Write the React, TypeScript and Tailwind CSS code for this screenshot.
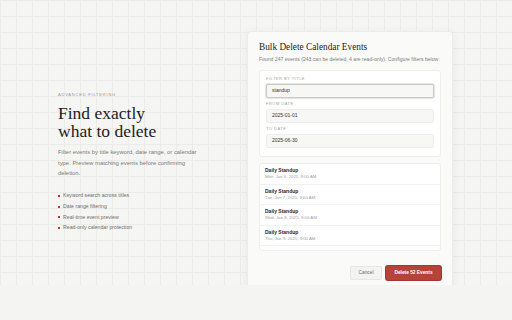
import type React from 'react';

const sans = { fontFamily: '"Liberation Sans", Arial, sans-serif' };
const serif = { fontFamily: '"Liberation Serif", "Times New Roman", serif' };

const features = [
  'Keyword search across titles',
  'Date range filtering',
  'Real-time event preview',
  'Read-only calendar protection',
];

const events = [
  { title: 'Daily Standup', when: 'Mon, Jan 6, 2025, 9:00 AM' },
  { title: 'Daily Standup', when: 'Tue, Jan 7, 2025, 9:00 AM' },
  { title: 'Daily Standup', when: 'Wed, Jan 8, 2025, 9:00 AM' },
  { title: 'Daily Standup', when: 'Thu, Jan 9, 2025, 9:00 AM' },
  { title: 'Team Standup Sync', when: 'Fri, Jan 10, 2025, 9:00 AM' },
];

const Field: React.FC<{ label: string; value: string; focused?: boolean }> = ({ label, value, focused }) => (
  <div className="flex flex-col gap-[2px]">
    <span className="text-[4px] leading-[6px] tracking-[0.12em] text-[#a3a3a0] uppercase">{label}</span>
    <div
      className={`h-[14px] rounded-[2px] border bg-[#f7f7f6] px-[5px] flex items-center text-[5px] text-[#333] ${
        focused ? 'border-[#c9c9c6] shadow-[0_0_0_1px_#e6e6e3]' : 'border-[#ededeb]'
      }`}
    >
      {value}
    </div>
  </div>
);

export default function App() {
  return (
    <div className="w-[512px] h-[320px] bg-[#f4f4f3] overflow-hidden" style={sans}>
      <div className="h-[285px] overflow-hidden flex bg-[#f5f5f3] bg-[linear-gradient(to_right,#ebebe8_1px,transparent_1px),linear-gradient(to_bottom,#ebebe8_1px,transparent_1px)] bg-[size:16px_16px] pl-[58px]">
        {/* left copy */}
        <div className="w-[189px] pt-[92px]">
          <div className="text-[4px] leading-[5px] tracking-[0.2em] text-[#9a9a97] uppercase">Advanced Filtering</div>
          <h1 className="mt-[7px] text-[17.5px] leading-[18px] text-[#1c1c1c]" style={serif}>
            Find exactly
            <br />
            what to delete
          </h1>
          <p className="mt-[7px] w-[142px] text-[5.9px] leading-[10.5px] text-[#7a7a77]">
            Filter events by title keyword, date range, or calendar type. Preview matching events before confirming
            deletion.
          </p>
          <ul className="mt-[12px] flex flex-col">
            {features.map((f) => (
              <li key={f} className="flex items-center gap-[3px] h-[10.8px] text-[5.2px] text-[#6f6f6c]">
                <span className="w-[2px] h-[2px] bg-[#b8342c]" />
                {f}
              </li>
            ))}
          </ul>
        </div>

        {/* modal */}
        <div className="mt-[31px] w-[206px] h-[280px] shrink-0 rounded-t-[4px] bg-[#fafaf9] border border-[#ecebe8] shadow-[0_2px_10px_rgba(0,0,0,0.06)] px-[11px] pt-[9px]">
          <h2 className="text-[9.3px] leading-[13px] text-[#1c1c1c]" style={serif}>
            Bulk Delete Calendar Events
          </h2>
          <p className="mt-[1px] text-[5.1px] leading-[8px] text-[#7a7a77] whitespace-nowrap">
            Found 247 events (243 can be deleted, 4 are read-only). Configure filters below:
          </p>

          <div className="mt-[7px] rounded-[3px] border border-[#eeeeec] bg-white px-[6px] pt-[5px] pb-[8px] flex flex-col gap-[3px]">
            <Field label="Filter by title" value="standup" focused />
            <Field label="From date" value="2025-01-01" />
            <Field label="To date" value="2025-06-30" />
          </div>

          <div className="mt-[6px] h-[88px] overflow-hidden rounded-[3px] border border-[#eeeeec] bg-white">
            {events.map((e, i) => (
              <div key={i} className="px-[5px] pt-[3px] pb-[3.5px] border-b border-[#f1f1ef]">
                <div className="text-[5px] leading-[7px] font-bold text-[#2a2a2a]">{e.title}</div>
                <div className="text-[4.3px] leading-[6px] text-[#a0a09d]">{e.when}</div>
              </div>
            ))}
          </div>

          <div className="mt-[15px] flex justify-end gap-[4px]">
            <button className="h-[14px] w-[32px] rounded-[2px] border border-[#e6e6e3] bg-[#f3f3f1] text-[4.8px] text-[#6a6a67]">
              Cancel
            </button>
            <button className="h-[14px] w-[55px] rounded-[2px] bg-[#b4433a] shadow-[0_0_0_1px_#a3372f] text-[4.8px] font-bold text-white">
              Delete 52 Events
            </button>
          </div>
        </div>
      </div>
    </div>
  );
}
